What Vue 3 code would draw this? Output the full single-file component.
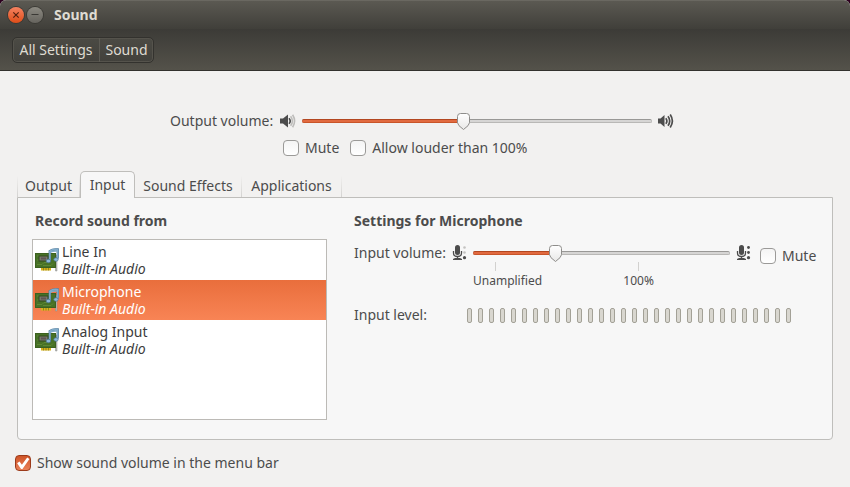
<script setup>
import { ref } from 'vue'

const tabs = [
  { name: 'Output', size: 'w-output' },
  { name: 'Input', size: 'w-input' },
  { name: 'Sound Effects', size: 'w-effects' },
  { name: 'Applications', size: 'w-apps' },
]
const activeTab = ref('Input')
const devices = ['Line In', 'Microphone', 'Analog Input']
const selected = ref('Microphone')
const outputVolume = ref(46)
const inputVolume = ref(32)
const outputMute = ref(false)
const louder = ref(false)
const inputMute = ref(false)
const showInBar = ref(true)
</script>

<template>
  <div class="window">
    <header class="header">
      <div class="titlebar">
        <button class="wm close" aria-label="Close">
          <svg viewBox="0 0 16 16" width="16" height="16"><path d="M5.3 5.3l5.4 5.4M10.7 5.3l-5.4 5.4" stroke="#54200f" stroke-width="1.2" /></svg>
        </button>
        <button class="wm minimize" aria-label="Minimize">
          <svg viewBox="0 0 16 16" width="16" height="16"><path d="M4.5 7.5h7" stroke="#3a3935" stroke-width="1" /></svg>
        </button>
        <h1>Sound</h1>
      </div>
      <nav class="toolbar">
        <div class="crumbs">
          <button class="crumb all">All Settings</button>
          <button class="crumb">Sound</button>
        </div>
      </nav>
    </header>

    <main class="content">
      <section class="output">
        <div class="output-row">
          <label for="outvol">Output volume:</label>
          <svg class="icon" viewBox="0 0 16 16" width="16" height="16">
            <path d="M0 5.5h3L8 1.5v13l-5-4H0z" fill="#4c4c4c" />
            <path d="M9 5.2q2.4 2.8 0 5.6" fill="none" stroke="#4c4c4c" stroke-width="1.6" />
            <path d="M10.6 3.2q3.6 4.8 0 9.6M12.6 1.8q4 6.2 0 12.4" fill="none" stroke="#bdbcba" stroke-width="1.6" />
          </svg>
          <div class="slider">
            <div class="track"><div class="fill" :style="{ width: outputVolume + '%' }"></div></div>
            <svg class="thumb" :style="{ left: outputVolume + '%' }" viewBox="0 0 13 17" width="13" height="17">
              <path d="M3.5.5h6q3 0 3 3v6.2q0 2.6-6 6.8-6-4.2-6-6.8V3.5q0-3 3-3z" fill="url(#knob)" stroke="#8e8d8b" />
            </svg>
            <input id="outvol" v-model="outputVolume" type="range" min="0" max="100" />
          </div>
          <svg class="icon" viewBox="0 0 16 16" width="16" height="16">
            <path d="M0 5.5h2.5L6.5 2v12l-4-3.5H0z" fill="#4c4c4c" />
            <path d="M7.8 5.2q2.2 2.8 0 5.6M10 3.2q3.4 4.8 0 9.6M12.2 1.5q4.4 6.5 0 13" fill="none" stroke="#4c4c4c" stroke-width="1.7" />
          </svg>
        </div>
        <div class="output-checks">
          <label class="check"><input v-model="outputMute" type="checkbox" />Mute</label>
          <label class="check"><input v-model="louder" type="checkbox" />Allow louder than 100%</label>
        </div>
      </section>

      <section class="notebook">
        <div class="tabs" role="tablist">
          <button
            v-for="t in tabs"
            :key="t.name"
            role="tab"
            class="tab"
            :class="[t.size, { active: activeTab === t.name }]"
            :aria-selected="activeTab === t.name"
            @click="activeTab = t.name"
          >{{ t.name }}</button>
        </div>
        <div class="panel" role="tabpanel">
          <div class="sources">
            <h2>Record sound from</h2>
            <div class="list" role="listbox" aria-label="Record sound from">
              <button
                v-for="d in devices"
                :key="d"
                role="option"
                class="device"
                :class="{ selected: selected === d }"
                :aria-selected="selected === d"
                @click="selected = d"
              >
                <svg viewBox="0 0 24 24" width="24" height="24">
                  <path d="M19 7h3v16h-1.5V12H19z" fill="#b9bab8" stroke="#8b8c89" stroke-width=".5" />
                  <rect x="6" y="18" width="10" height="4.5" fill="#d7b41c" />
                  <path d="M8.5 19v3.5M11 19v3.5M13.5 19v3.5" stroke="#7d7118" stroke-width=".7" />
                  <rect x=".5" y="5.5" width="20" height="14" fill="#477126" stroke="#3c611f" />
                  <path d="M2 16.5h5l2-2h3M2 8h2M2 12h2M8 17.5h8l2-2" fill="none" stroke="#5d8833" />
                  <rect x="4" y="8" width="9" height="5" fill="#77766b" stroke="#33491f" />
                  <rect x="6" y="9.5" width="5" height="2" fill="#5d5654" />
                  <path d="M14.8 12.5V3.2q3-2.4 8-1.7v9" fill="none" stroke="#4c7596" stroke-width="2.4" />
                  <path d="M14.8 12.5V3.2q3-2.4 8-1.7v9M15 4.5q3-2 7.5-1.5" fill="none" stroke="#80accb" stroke-width="1.5" />
                  <ellipse cx="13.4" cy="13" rx="2.3" ry="1.8" fill="#8bb9dc" stroke="#4c7596" stroke-width=".7" />
                  <ellipse cx="21" cy="11.5" rx="2.2" ry="1.8" fill="#8bb9dc" stroke="#4c7596" stroke-width=".7" />
                </svg>
                <span class="names"><span>{{ d }}</span><em>Built-in Audio</em></span>
              </button>
            </div>
          </div>

          <div class="settings">
            <h2>Settings for Microphone</h2>
            <div class="input-row">
              <label for="invol">Input volume:</label>
              <svg class="icon" viewBox="-1 0 16 16" width="16" height="16">
                <rect x="3" y="0" width="5" height="10" rx="2.5" fill="#4c4c4c" />
                <path d="M1.5 6v2q0 3.5 4 3.5t4-3.5V6M5.5 11v3" fill="none" stroke="#4c4c4c" stroke-width="1.3" />
                <path d="M1 15v-1l2-1h5l2 1v1z" fill="#4c4c4c" />
                <g fill="#c4c3c1"><circle cx="12.5" cy="2.5" r="1.3" /><circle cx="12.5" cy="7.5" r="1.3" /></g>
                <circle cx="12.5" cy="12.7" r="1.6" fill="#4c4c4c" />
              </svg>
              <div class="slider">
                <div class="track"><div class="fill" :style="{ width: inputVolume + '%' }"></div></div>
                <svg class="thumb" :style="{ left: inputVolume + '%' }" viewBox="0 0 13 17" width="13" height="17">
                  <path d="M3.5.5h6q3 0 3 3v6.2q0 2.6-6 6.8-6-4.2-6-6.8V3.5q0-3 3-3z" fill="url(#knob)" stroke="#8e8d8b" />
                </svg>
                <input id="invol" v-model="inputVolume" type="range" min="0" max="100" />
              </div>
              <svg class="icon" viewBox="0 0 16 16" width="16" height="16">
                <rect x="3" y="0" width="5" height="10" rx="2.5" fill="#4c4c4c" />
                <path d="M1.5 6v2q0 3.5 4 3.5t4-3.5V6M5.5 11v3" fill="none" stroke="#4c4c4c" stroke-width="1.3" />
                <path d="M1 15v-1l2-1h5l2 1v1z" fill="#4c4c4c" />
                <g fill="#4c4c4c"><circle cx="12.5" cy="2.5" r="1.4" /><circle cx="12.5" cy="7.5" r="1.4" /><circle cx="12.5" cy="12.7" r="1.6" /></g>
              </svg>
              <label class="check"><input v-model="inputMute" type="checkbox" />Mute</label>
              <div class="marks">
                <span class="mark low">Unamplified</span>
                <span class="mark full">100%</span>
              </div>
            </div>
            <div class="level-row">
              <span>Input level:</span>
              <div class="level" role="meter" aria-label="Input level" aria-valuenow="0" aria-valuemin="0" aria-valuemax="30">
                <i v-for="n in 30" :key="n"></i>
              </div>
            </div>
          </div>
        </div>
      </section>

      <label class="check footer"><input v-model="showInBar" type="checkbox" />Show sound volume in the menu bar</label>
    </main>

    <svg class="defs" width="0" height="0" aria-hidden="true">
      <defs>
        <linearGradient id="knob" x1="0" y1="0" x2="0" y2="1">
          <stop offset="0" stop-color="#fff" />
          <stop offset="1" stop-color="#e9e8e7" />
        </linearGradient>
      </defs>
    </svg>
  </div>
</template>

<style>
body {
  background: #2c001e;
}
</style>

<style scoped>
.window {
  min-height: 100vh;
  display: flex;
  flex-direction: column;
  background: #f2f1f0;
  border-radius: 6px 6px 0 0;
  overflow: hidden;
  color: #4c4c4c;
  font: 14px/20px "Noto Sans", sans-serif;
}
* {
  box-sizing: border-box;
}
button {
  font: inherit;
  color: inherit;
  border: 0;
  padding: 0;
  margin: 0;
  background: none;
}
h1,
h2 {
  margin: 0;
  font-size: 14px;
  line-height: 20px;
  font-weight: bold;
}
svg {
  display: block;
  flex: none;
}
.header {
  color: #dfdbd2;
  border-bottom: 1px solid #33322e;
}
.titlebar {
  display: flex;
  align-items: center;
  height: 29px;
  padding-left: 8px;
  background: linear-gradient(#5b5952, #403f3a);
  border-top: 1px solid #6a6861;
}
.titlebar h1 {
  margin-left: 11px;
}
.wm {
  width: 16px;
  height: 16px;
  border-radius: 50%;
  box-shadow: 0 0 0 1px #3b3a35;
}
.close {
  background: linear-gradient(#f58261, #df4d18);
  margin-right: 3px;
}
.minimize {
  background: linear-gradient(#8b8981, #66645e);
}
.toolbar {
  height: 41px;
  padding: 8px 12px;
  background: linear-gradient(#3c3b37, #54524a);
}
.crumbs {
  display: inline-flex;
  height: 26px;
  border: 1px solid #33322e;
  border-radius: 5px;
  background: linear-gradient(#4b4a44, #42413c);
  box-shadow: inset 0 0 0 1px #55534c;
}
.crumb {
  width: 53px;
  white-space: nowrap;
}
.crumb.all {
  width: 87px;
  border-right: 1px solid #5d5b54;
}
.content {
  flex: 1;
  padding: 40px 17px 14px;
}
.output {
  padding: 0 159px 0 153px;
}
.output-row {
  display: flex;
  align-items: center;
}
.output-row > label {
  width: 110px;
  white-space: nowrap;
}
.slider {
  position: relative;
  flex: 1;
  height: 20px;
  margin: 0 6px;
  display: flex;
  align-items: center;
}
.track {
  width: 100%;
  height: 4px;
  border-radius: 2px;
  background: #d6d5d4;
  border: 1px solid #b9b8b6;
  border-top-color: #999896;
}
.fill {
  height: 4px;
  margin: -1px;
  border-radius: 2px;
  background: #e16a40;
  border-top: 1px solid #b34720;
  border-bottom: 1px solid #c95529;
}
.thumb {
  position: absolute;
  top: 2px;
  margin-left: -6px;
}
.slider input {
  position: absolute;
  inset: 0;
  width: 100%;
  margin: 0;
  opacity: 0;
}
.output-checks {
  display: flex;
  gap: 11px;
  padding: 7px 0 0 113px;
}
.check {
  display: flex;
  align-items: center;
  gap: 6px;
  white-space: nowrap;
}
.check input {
  appearance: none;
  flex: none;
  width: 16px;
  height: 16px;
  margin: 0;
  border: 1px solid #9b9a98;
  border-radius: 4px;
  background: linear-gradient(#f4f4f4, #fff);
}
.check input:checked {
  border-color: #9c3a1a;
  background: linear-gradient(#cf5528, #ea8058);
}
.check input:checked::before {
  content: "";
  display: block;
  width: 14px;
  height: 14px;
  background: #fff;
  clip-path: polygon(8% 52%, 25% 40%, 42% 62%, 80% 10%, 96% 22%, 46% 92%, 36% 92%);
}
.notebook {
  margin-top: 13px;
}
.tabs {
  display: flex;
  align-items: flex-end;
  height: 26px;
}
.tab {
  height: 26px;
  padding-top: 3px;
  white-space: nowrap;
  border-right: 1px solid;
  border-image: linear-gradient(transparent 20%, #d2d1cf) 1;
}
.tab:first-child {
  border-left: 1px solid;
}
.w-output {
  width: 63px;
}
.w-input {
  width: 55px;
}
.w-effects {
  width: 107px;
}
.w-apps {
  width: 100px;
}
.tab.active {
  position: relative;
  padding: 0 0 1px;
  height: 27px;
  margin-bottom: -1px;
  background: #f7f7f7;
  border: 1px solid #bfbebb;
  border-bottom: 0;
  border-image: none;
  border-radius: 5px 5px 0 0;
}
.panel {
  display: flex;
  gap: 27px;
  min-height: 243px;
  padding: 13px 14px 19px;
  background: #f7f7f7;
  border: 1px solid #bfbebb;
  border-radius: 0 0 4px 4px;
}
.sources {
  flex: 295;
  display: flex;
  flex-direction: column;
}
.sources h2 {
  padding-left: 3px;
}
.list {
  flex: 1;
  margin-top: 8px;
  background: #fff;
  border: 1px solid #bcbab6;
}
.device {
  display: flex;
  align-items: center;
  gap: 3px;
  width: 100%;
  height: 40px;
  padding: 0 2px;
  text-align: left;
  color: #3c3c3c;
}
.device.selected {
  color: #fff;
  background: linear-gradient(#e96e3c, #f88455);
}
.names {
  display: flex;
  flex-direction: column;
  line-height: 17px;
}
.settings {
  flex: 464;
}
.input-row {
  display: grid;
  grid-template-columns: 97px 16px 1fr 16px 66px;
  align-items: start;
  padding-top: 12px;
}
.input-row .icon {
  margin-top: 2px;
}
.input-row .check {
  padding: 3px 0 0 8px;
}
.input-row > label {
  white-space: nowrap;
}
.marks {
  grid-column: 3;
  display: grid;
  grid-template-columns: 22fr 143fr 91fr;
  margin: -4px 6px 0;
  font-size: 12px;
  line-height: 16px;
}
.mark {
  display: flex;
  flex-direction: column;
  white-space: nowrap;
}
.mark::before {
  content: "";
  width: 1px;
  height: 9px;
  margin-bottom: 2px;
  background: #d2d1cf;
}
.mark.low {
  grid-column: 1;
  width: 0;
}
.mark.low::before {
  margin-left: 22px;
}
.mark.full {
  grid-column: 3;
  width: 0;
  align-items: center;
}
.level-row {
  display: flex;
  align-items: center;
  padding-top: 16px;
}
.level-row > span {
  width: 113px;
}
.level {
  display: flex;
  gap: 6px;
}
.level i {
  width: 5px;
  height: 15px;
  border: 1px solid #a3a197;
  border-radius: 2px;
  background: #d9d7d0;
}
.footer {
  display: inline-flex;
  margin: 13px 0 0 -2px;
}
.defs {
  position: absolute;
}
</style>
